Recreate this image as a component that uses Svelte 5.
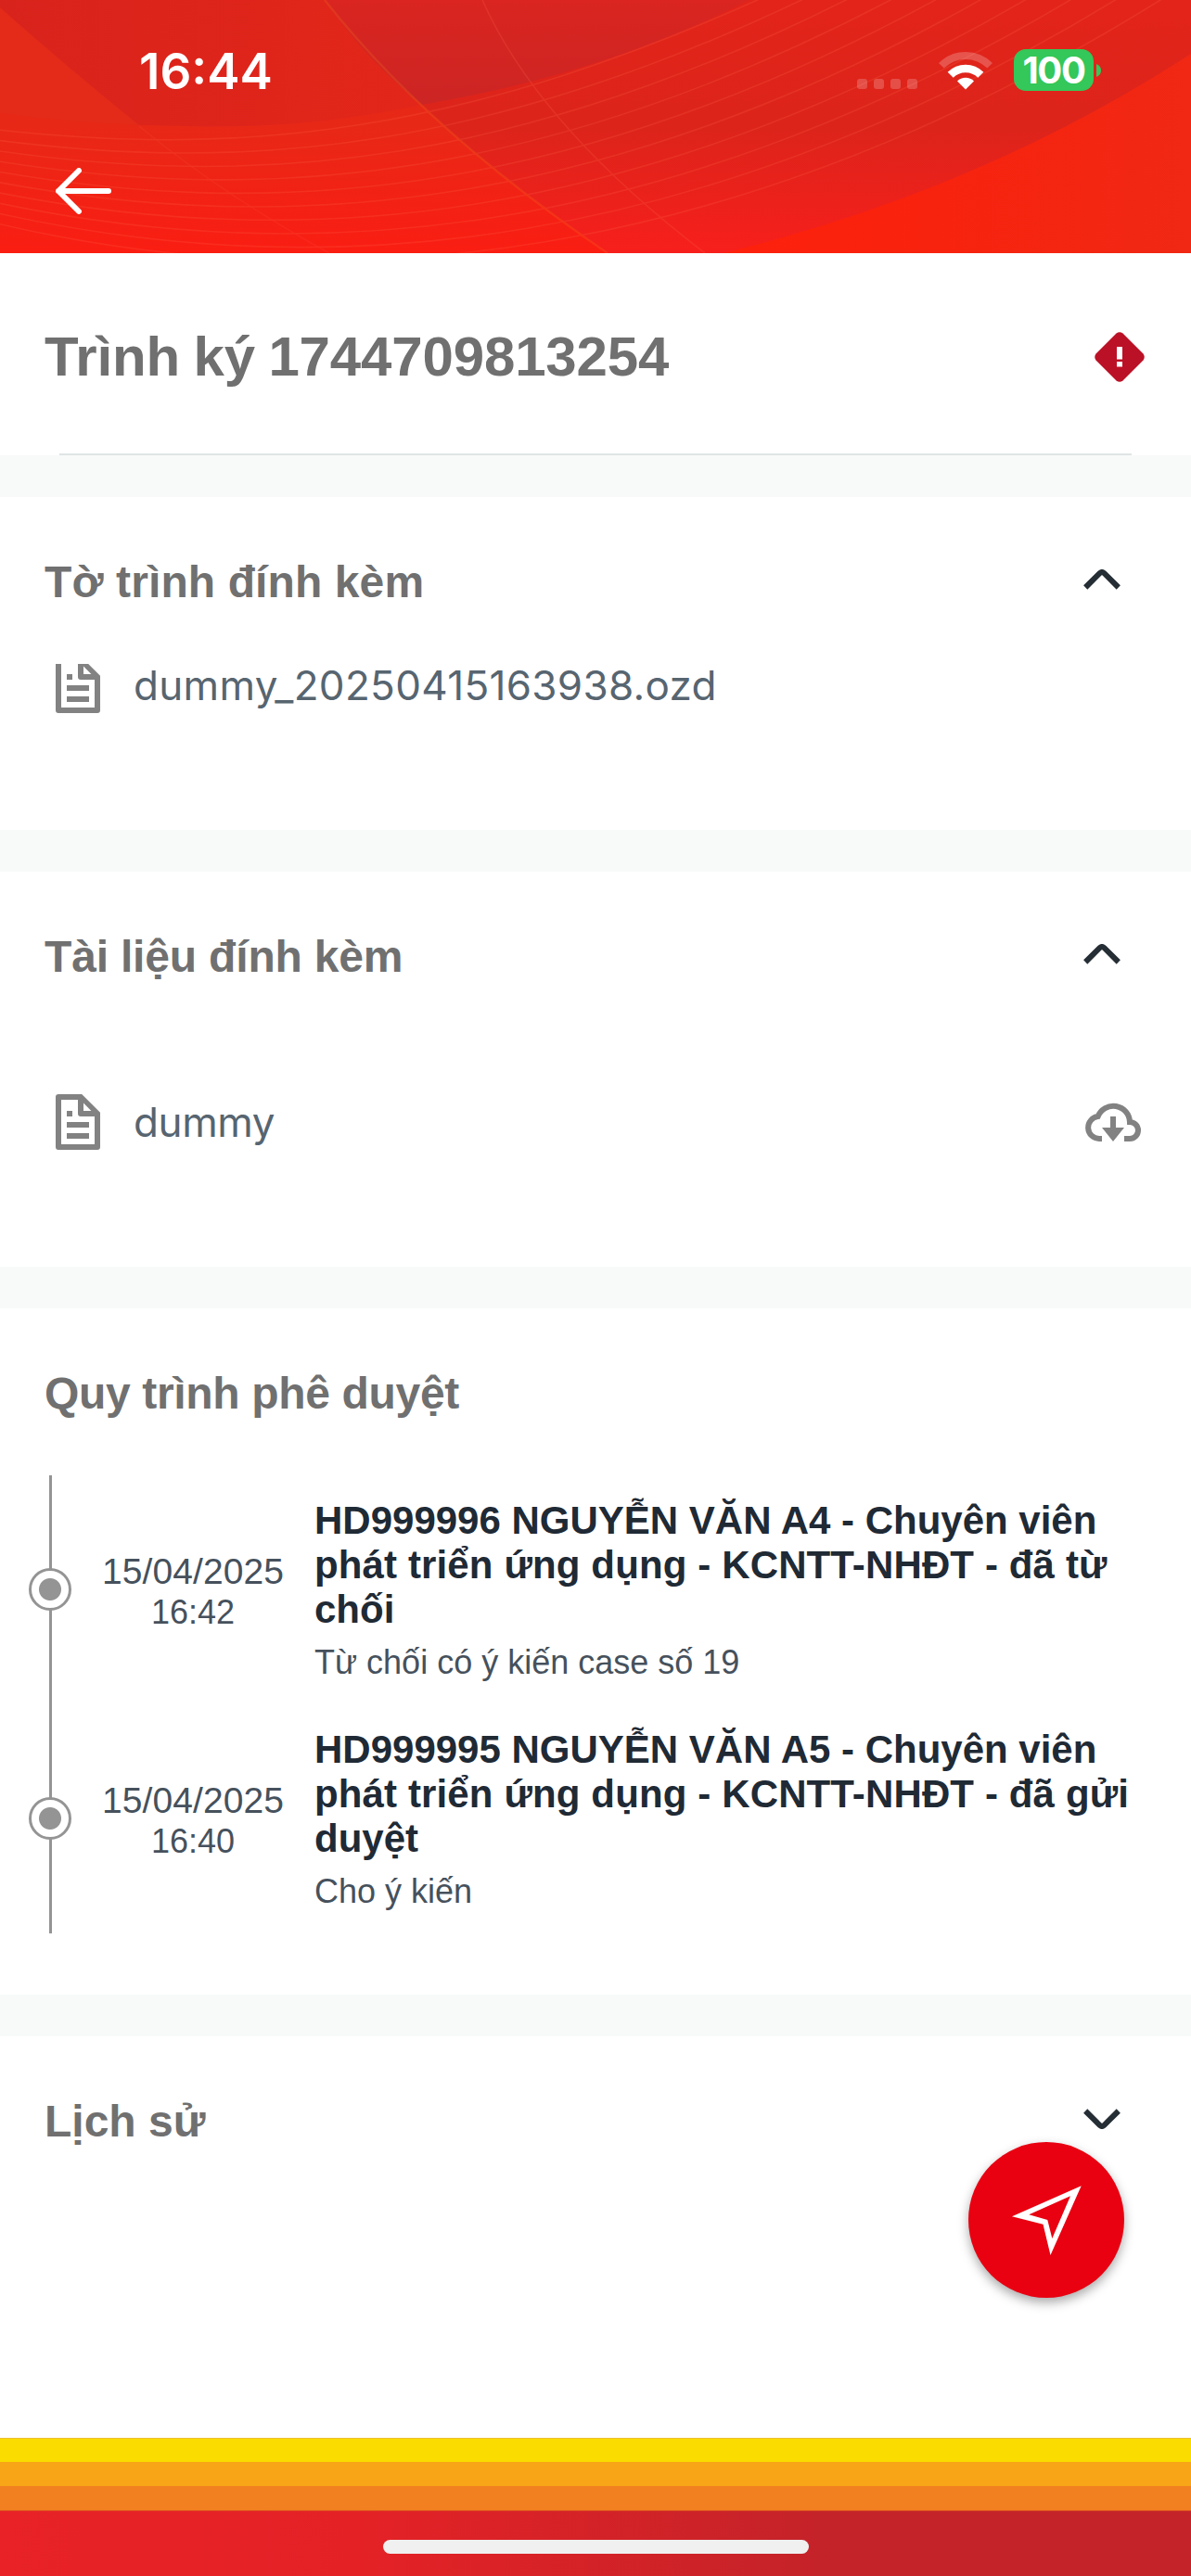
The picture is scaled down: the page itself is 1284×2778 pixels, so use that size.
<script>
  const entries = [
    {
      date: '15/04/2025',
      time: '16:42',
      lines: ['HD999996 NGUYỄN VĂN A4 - Chuyên viên', 'phát triển ứng dụng - KCNTT-NHĐT - đã từ', 'chối'],
      note: 'Từ chối có ý kiến case số 19'
    },
    {
      date: '15/04/2025',
      time: '16:40',
      lines: ['HD999995 NGUYỄN VĂN A5 - Chuyên viên', 'phát triển ứng dụng - KCNTT-NHĐT - đã gửi', 'duyệt'],
      note: 'Cho ý kiến'
    }
  ];
  // Concentric hairlines decorating the header
  const rings = Array.from({ length: 10 }, (_, i) => i);
</script>

{#snippet docIcon()}
  <svg class="doc" viewBox="0 0 24 24" aria-hidden="true">
    <path fill-rule="evenodd" d="M5 2H13.4L20 8.6V21a1 1 0 0 1-1 1H5a1 1 0 0 1-1-1V3a1 1 0 0 1 1-1ZM6 4V20H18V10H13a1 1 0 0 1-1-1V4ZM14 5.2V8H16.8ZM8 8H10V10H8ZM8 12H16V14H8ZM8 16H16V18H8Z" />
  </svg>
{/snippet}

{#snippet chevron(down)}
  <svg class="chevron" class:down viewBox="0 0 40 22" aria-hidden="true">
    <path d="M2.2 19.5 L17.6 4.2 Q20 1.9 22.4 4.2 L37.8 19.5" />
  </svg>
{/snippet}

<div class="screen">
  <header>
    <svg class="backdrop" viewBox="0 0 1284 273" preserveAspectRatio="none" aria-hidden="true">
      <defs>
        <linearGradient id="base" x1="0" y1="0" x2="0" y2="1">
          <stop offset="0" stop-color="#e22819" />
          <stop offset=".5" stop-color="#e82817" />
          <stop offset="1" stop-color="#fa1d12" />
        </linearGradient>
        <linearGradient id="band" x1="0" y1="0" x2="0" y2="1">
          <stop offset="0" stop-color="#e3241a" />
          <stop offset=".5" stop-color="#dc241b" />
          <stop offset="1" stop-color="#f71f1c" />
        </linearGradient>
        <linearGradient id="corner" x1="0" y1="0" x2="1" y2="0">
          <stop offset="0" stop-color="#fd210d" />
          <stop offset=".35" stop-color="#f9220d" />
          <stop offset="1" stop-color="#f02814" />
        </linearGradient>
        <linearGradient id="lens" x1="0" y1="0" x2="0" y2="1">
          <stop offset="0" stop-color="#da2520" />
          <stop offset="1" stop-color="#cc2524" />
        </linearGradient>
        <linearGradient id="wedge" x1="0" y1="0" x2="1" y2="0">
          <stop offset="0" stop-color="#d8231c" />
          <stop offset="1" stop-color="#e32619" />
        </linearGradient>
      </defs>
      <rect width="1284" height="273" fill="url(#base)" />
      <path fill="#e42a18" d="M0 8L150 135Q70 132 0 122Z" />
      <path fill="url(#wedge)" d="M0 0H350Q392 62 455 113Q330 140 200 136L150 135Q72 72 0 8Z" />
      <path fill="url(#band)" d="M350 0H1284V58Q1060 204 780 273H655Q460 140 350 0Z" />
      <path fill="url(#lens)" d="M350 0H808Q650 80 455 113Q392 62 350 0Z" />
      <path fill="url(#corner)" d="M1284 58V273H780Q1060 204 1284 58Z" />
      <g fill="none" stroke="#ff6a4c" stroke-width="1.6" opacity=".2">
        {#each rings as i}
          <path d="M-20 {138 + i * 11}C{250 + i * 9} {170 + i * 17} {500 + i * 33} {150 + i * 18} {860 + i * 53} {-20 - i * 4}" />
        {/each}
        <path d="M350 0Q460 140 655 273" stroke="#ff7a20" stroke-width="2.4" />
        <path d="M520 0Q580 135 760 273" />
        <path d="M150 136Q240 210 355 273" opacity=".6" />
      </g>
    </svg>
    <div class="status">
      <span class="clock">16:44</span>
      <div class="indicators">
        <div class="signal"><i></i><i></i><i></i><i></i></div>
        <svg class="wifi" viewBox="0 0 58 42" aria-hidden="true">
          <path d="M2.8 15.8A37 37 0 0 1 55.2 15.8" stroke-width="8" opacity=".22" />
          <path d="M12.7 25.7A23 23 0 0 1 45.3 25.7" stroke-width="8.6" />
          <path class="solid" d="M29 41.5L20 32.5A12.8 12.8 0 0 1 38 32.5Z" />
        </svg>
        <div class="battery">100</div>
        <svg class="nub" viewBox="0 0 5 14" aria-hidden="true"><path d="M0 0Q5 2 5 7Q5 12 0 14Z" /></svg>
      </div>
    </div>
    <svg class="back" viewBox="0 0 60 50" aria-hidden="true">
      <path d="M25 3L3 25L25 47M3 25H57" />
    </svg>
  </header>

  <section class="title-card">
    <div class="title-row">
      <h1>Trình ký 1744709813254</h1>
      <svg class="alert" viewBox="0 0 54 54" aria-hidden="true">
        <path fill="#bb1126" d="M23.5 1.5Q27-1 30.5 1.5L52.5 23.5Q55 27 52.5 30.5L30.5 52.5Q27 55 23.5 52.5L1.5 30.5Q-1 27 1.5 23.5Z" />
        <path fill="#fff" d="M24 16H30V29.5H24ZM24 32H30V37.5H24Z" />
      </svg>
    </div>
    <hr />
  </section>

  <section class="block memo">
    <div class="head"><h2 class="h-memo">Tờ trình đính kèm</h2>{@render chevron(false)}</div>
    <div class="file clipped">
      <div class="clip">{@render docIcon()}</div>
      <span class="name long">dummy_20250415163938.ozd</span>
    </div>
  </section>

  <section class="block attachments">
    <div class="head"><h2 class="h-att">Tài liệu đính kèm</h2>{@render chevron(false)}</div>
    <div class="file">
      {@render docIcon()}
      <span class="name">dummy</span>
      <svg class="cloud" viewBox="0 0 60 42" aria-hidden="true">
        <path class="outline" d="M18 39H15A12 12 0 0 1 13.6 15.1A17.8 17.8 0 0 1 48 21A9 9 0 0 1 48 39H42" />
        <path d="M27 15H33V27H42L30 42L18 27H27Z" />
      </svg>
    </div>
  </section>

  <section class="block process">
    <div class="head"><h2 class="h-proc">Quy trình phê duyệt</h2></div>
    <ol>
      {#each entries as entry}
        <li>
          <div class="rail"><span class="dot"></span></div>
          <div class="when"><span class="date">{entry.date}</span><span>{entry.time}</span></div>
          <div class="what">
            <strong>{#each entry.lines as line}<span>{line}</span>{/each}</strong>
            <p>{entry.note}</p>
          </div>
        </li>
      {/each}
    </ol>
  </section>

  <section class="block history">
    <div class="head"><h2>Lịch sử</h2>{@render chevron(true)}</div>
    <button class="fab" aria-label="Gửi">
      <svg viewBox="0 0 168 168" aria-hidden="true">
        <path fill-rule="evenodd" d="M121.7 47.3L47 80.3L80.5 88.7L88.5 122ZM110 58.3L90.3 104L85.3 84L65.3 78.3Z" />
      </svg>
    </button>
  </section>

  <footer>
    <div class="stripe yellow"></div>
    <div class="stripe amber"></div>
    <div class="stripe orange"></div>
    <div class="base"><div class="home"></div></div>
  </footer>
</div>

<style>
  :global(body) { margin: 0; background: #fff; }
  * { box-sizing: border-box; }
  .screen {
    width: 1284px;
    height: 2778px;
    display: flex;
    flex-direction: column;
    overflow: hidden;
    background: #f7faf9;
    font-family: 'Liberation Sans', Arial, sans-serif;
  }
  h1, h2, p, ol { margin: 0; padding: 0; }
  svg { display: block; flex: none; }

  header { position: relative; height: 273px; flex: none; color: #fff; }
  .backdrop { position: absolute; inset: 0; width: 100%; height: 100%; }
  .status {
    position: relative;
    display: flex;
    justify-content: space-between;
    height: 181px;
    padding: 45px 97px 0 150px;
    font-family: Inter, sans-serif;
  }
  .clock { font-size: 53px; line-height: 65px; font-weight: 600; }
  .indicators { display: flex; align-items: flex-start; }
  .signal { display: flex; gap: 7px; margin: 40px 23px 0 0; }
  .signal i { width: 11px; height: 11px; border-radius: 3px; background: rgba(255, 255, 255, 0.2); }
  .wifi { width: 58px; height: 42px; margin: 10px 23px 0 0; fill: none; stroke: #fff; }
  .wifi .solid { fill: #fff; stroke: none; }
  .battery {
    width: 86px;
    height: 45px;
    margin-top: 8px;
    border-radius: 13px;
    background: #34c759;
    font-size: 40px;
    line-height: 45px;
    font-weight: 700;
    text-align: center;
    letter-spacing: -1.4px;
  }
  .nub { width: 5px; height: 14px; margin: 24px 0 0 3px; fill: #34c759; }
  .back {
    position: relative;
    width: 60px;
    height: 50px;
    margin-left: 60px;
    fill: none;
    stroke: #fff;
    stroke-width: 6;
    stroke-linecap: round;
    stroke-linejoin: round;
  }

  .title-card {
    height: 218px;
    flex: none;
    display: flex;
    flex-direction: column;
    justify-content: space-between;
    padding: 77px 50px 0 48px;
    background: #fff;
    margin-bottom: 45px;
  }
  .title-row { display: flex; justify-content: space-between; align-items: center; }
  h1 { font-size: 60px; line-height: 70px; color: #707070; letter-spacing: -0.15px; word-spacing: -2px; }
  .alert { width: 54px; height: 54px; }
  hr { width: 1156px; height: 2px; margin: 0 0 0 16px; border: 0; background: #dfe4e4; }

  .block { flex: none; background: #fff; padding: 64px 54px 0 48px; margin-bottom: 45px; }
  .memo { height: 359px; }
  .attachments { height: 426px; }
  .process { height: 740px; }
  .history { position: relative; height: 433px; margin-bottom: 0; }
  .head { display: flex; justify-content: space-between; align-items: flex-start; padding-right: 22px; }
  h2 { font-size: 48px; line-height: 56px; color: #707070; }
  .h-memo { letter-spacing: 0.1px; }
  .h-att { letter-spacing: -0.18px; }
  .h-proc { letter-spacing: -0.34px; }
  .chevron { width: 40px; height: 22px; margin-top: 14px; fill: none; stroke: #252e35; stroke-width: 6; }
  .down { transform: scaleY(-1); }

  .file { display: flex; align-items: center; margin-top: 114px; }
  .doc { width: 72px; height: 72px; fill: #828282; }
  .name { margin-left: 24px; font: 400 44px/60px Inter, sans-serif; color: #576570; letter-spacing: -0.4px; }
  .long { letter-spacing: 0.33px; }
  .cloud { width: 60px; height: 42px; margin-left: auto; fill: #828282; }
  .outline { fill: none; stroke: #828282; stroke-width: 6; }
  .clipped { align-items: flex-start; margin-top: 60px; }
  .clip { height: 59px; overflow: hidden; }
  .clip .doc { margin-top: -13px; }
  .clipped .name { margin-top: -7px; }

  ol { list-style: none; margin-top: 60px; }
  li { display: flex; height: 247px; }
  .rail {
    width: 46px;
    margin-left: -17px;
    flex: none;
    display: flex;
    align-items: center;
    background: linear-gradient(#949494, #949494) 22px 0 / 3px 100% no-repeat;
  }
  .dot {
    width: 46px;
    height: 46px;
    margin-bottom: 2px;
    border: 3px solid #949494;
    border-radius: 50%;
    background: radial-gradient(circle, #949494 11.5px, #fff 12.5px);
  }
  .when {
    width: 202px;
    margin-left: 30px;
    padding-top: 2px;
    flex: none;
    display: flex;
    flex-direction: column;
    justify-content: center;
    align-items: center;
    font-size: 36px;
    line-height: 43px;
    color: #46515c;
  }
  .date { font-size: 39px; line-height: 45px; letter-spacing: 0.1px; }
  .what { margin-left: 30px; padding-top: 25px; white-space: nowrap; }
  .what strong { display: flex; flex-direction: column; font-size: 42px; line-height: 48px; color: #1f2a35; }
  .what strong span:nth-child(2) { letter-spacing: 0.13px; }
  .what p { margin-top: 12px; font-size: 36px; line-height: 42px; color: #46515c; }

  .fab {
    position: absolute;
    left: 1044px;
    top: 114px;
    width: 168px;
    height: 168px;
    padding: 0;
    border: 0;
    border-radius: 50%;
    background: #e90011;
    box-shadow: 0 5px 12px rgba(0, 0, 0, 0.34);
  }
  .fab svg { width: 168px; height: 168px; fill: #fff; }

  footer { flex: 1; display: flex; flex-direction: column; }
  .stripe { height: 26px; flex: none; }
  .yellow { background: #fadc00; border-top: 1px solid #eebf30; }
  .amber { background: #f8a518; }
  .orange { background: #f27f20; }
  .base {
    flex: 1;
    padding-top: 31px;
    border-top: 1px solid #e0561f;
    background: linear-gradient(90deg, #e82227 0%, #e42226 30%, #c32329 70%, #c32329 100%);
  }
  .home { width: 459px; height: 15px; margin-left: 413px; border-radius: 8px; background: #f0f0f0; }
</style>
